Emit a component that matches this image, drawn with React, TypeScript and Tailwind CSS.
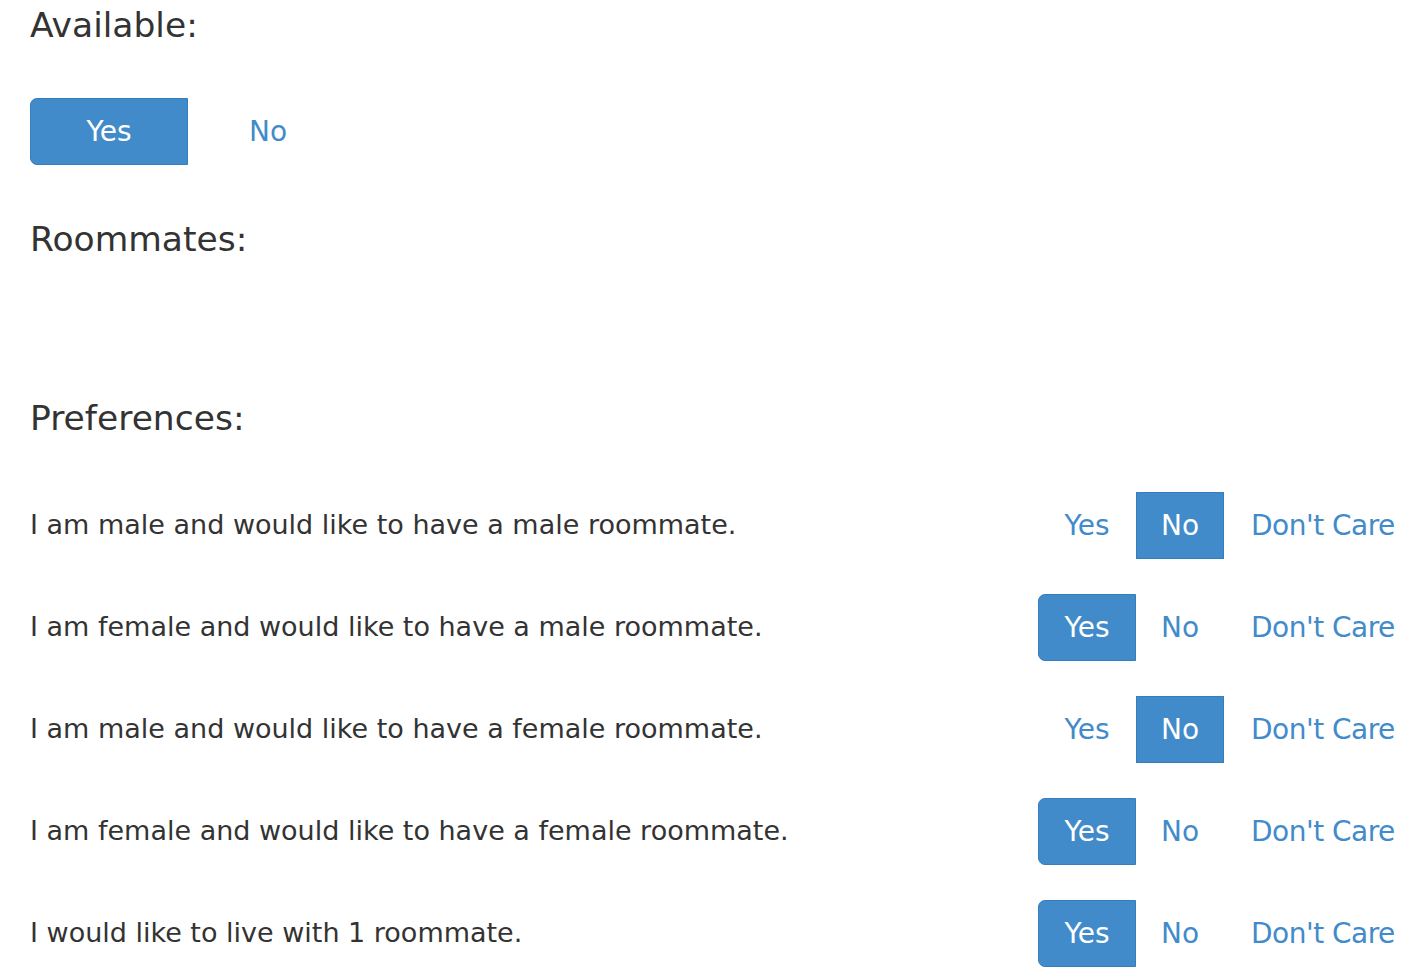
import React, { useState } from 'react'

type Choice = 'yes' | 'no' | 'dontcare'

const FONT = "font-['DejaVu_Sans','Liberation_Sans',sans-serif]"

interface SegmentProps {
  label: string
  active: boolean
  first?: boolean
  className?: string
  onClick: () => void
}

const Segment: React.FC<SegmentProps> = ({ label, active, first, className, onClick }) => (
  <button
    type="button"
    onClick={onClick}
    className={[
      'h-[67px] flex items-center border text-[28px] leading-none',
      first ? 'rounded-l-[7px]' : '',
      active ? 'bg-[#428bca] border-[#357ebd] text-white' : 'border-transparent text-[#428bca]',
      className ?? '',
    ].join(' ')}
  >
    {label}
  </button>
)

const prefs: { text: string; value: Choice }[] = [
  { text: 'I am male and would like to have a male roommate.', value: 'no' },
  { text: 'I am female and would like to have a male roommate.', value: 'yes' },
  { text: 'I am male and would like to have a female roommate.', value: 'no' },
  { text: 'I am female and would like to have a female roommate.', value: 'yes' },
  { text: 'I would like to live with 1 roommate.', value: 'yes' },
]

export default function App() {
  const [available, setAvailable] = useState(true)
  const [values, setValues] = useState<Choice[]>(prefs.map((p) => p.value))

  const setAt = (i: number, v: Choice) =>
    setValues((prev) => prev.map((x, j) => (j === i ? v : x)))

  return (
    <div className={`${FONT} w-[1412px] h-[978px] overflow-hidden bg-white pl-[30px] text-[#333]`}>
      <h4 className="mt-[5px] text-[34.5px] leading-[40px]">Available:</h4>
      <div className="mt-[53px] flex">
        <Segment label="Yes" first active={available} onClick={() => setAvailable(true)} className="w-[158px] justify-center" />
        <Segment label="No" active={!available} onClick={() => setAvailable(false)} className="w-[160px] justify-center" />
      </div>

      <h4 className="mt-[54px] text-[34.5px] leading-[40px]">Roommates:</h4>

      <h4 className="mt-[139px] text-[34.5px] leading-[40px]">Preferences:</h4>

      <div className="mt-[54px] flex flex-col gap-[35px]">
        {prefs.map((p, i) => (
          <div key={i} className="flex items-center justify-between">
            <span className="text-[27px] leading-none -mt-[3px]">{p.text}</span>
            <div className="flex">
              <Segment label="Yes" first active={values[i] === 'yes'} onClick={() => setAt(i, 'yes')} className="w-[98px] justify-center" />
              <Segment label="No" active={values[i] === 'no'} onClick={() => setAt(i, 'no')} className="w-[88px] justify-center" />
              <Segment label="Don't Care" active={values[i] === 'dontcare'} onClick={() => setAt(i, 'dontcare')} className="w-[188px] justify-start pl-[26px] tracking-[-0.5px]" />
            </div>
          </div>
        ))}
      </div>
    </div>
  )
}
